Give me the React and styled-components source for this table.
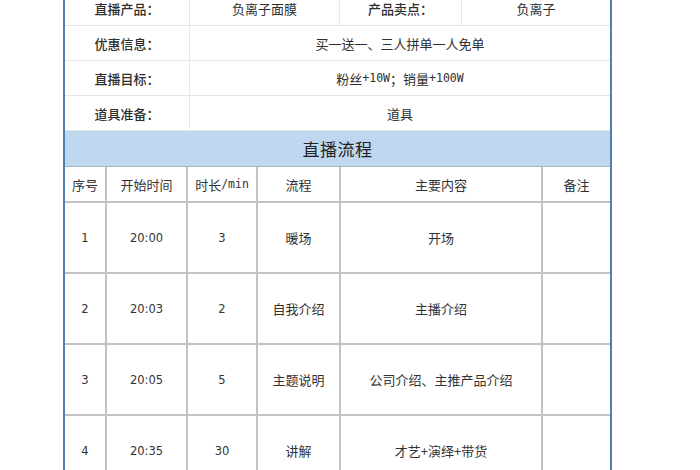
import React from "react";
import styled, { createGlobalStyle } from "styled-components";

const Global = createGlobalStyle`
  html, body { margin: 0; padding: 0; background: #ffffff; }
  body { font-family: "Noto Sans CJK SC", "Noto Sans", sans-serif; color: #333; overflow: hidden; }
`;

const Page = styled.div`
  width: 700px;
  height: 470px;
  overflow: hidden;
  background: #fff;
`;

const Sheet = styled.div`
  margin-left: 63px;
  margin-top: -9px;
  width: 545px;
  border-left: 2px solid #4f7fae;
  border-right: 2px solid #4f7fae;
  background: #fff;
`;

const InfoGrid = styled.div`
  display: grid;
  grid-template-columns: 125px 150px 122px 148px;
  grid-auto-rows: 35px;
`;

const InfoCell = styled.div`
  display: flex;
  align-items: center;
  justify-content: center;
  font-size: 13px;
  color: #2e2e2e;
  font-weight: ${(p) => (p.$label ? 500 : 400)};
  border-bottom: 1px solid #e4e4e4;
  border-right: ${(p) => (p.$last ? "none" : "1px solid #e8e8e8")};
  grid-column: ${(p) => p.$span || "auto"};
  white-space: nowrap;
`;

const Banner = styled.div`
  height: 35px;
  background: #bfd8ef;
  border-bottom: 1px solid #a9b4bf;
  display: flex;
  align-items: center;
  justify-content: center;
  font-size: 17px;
  color: #222;
  letter-spacing: 0.5px;
`;

const FlowGrid = styled.div`
  display: grid;
  grid-template-columns: 42px 81px 70px 83px 202px 67px;
`;

const FlowCell = styled.div`
  display: flex;
  align-items: center;
  justify-content: center;
  font-size: 13px;
  color: #333;
  border-bottom: 2px solid #c2c2c2;
  border-right: ${(p) => (p.$last ? "none" : "2px solid #c2c2c2")};
  white-space: nowrap;
  box-sizing: border-box;
  height: ${(p) => (p.$head ? "36px" : "71px")};
`;

const Num = styled.span`
  font-family: "DejaVu Sans", sans-serif;
  font-size: 11.5px;
`;

const Mono = styled.span`
  font-family: "DejaVu Sans Mono", monospace;
  font-size: 11.5px;
`;

const info = [
  [
    { t: "直播产品：", label: true },
    { t: "负离子面膜" },
    { t: "产品卖点：", label: true },
    { t: "负离子", last: true },
  ],
  [
    { t: "优惠信息：", label: true },
    { t: "买一送一、三人拼单一人免单", span: "span 3", last: true },
  ],
  [
    { t: "直播目标：", label: true },
    { t: <>粉丝<Mono>+10W</Mono>；销量<Mono>+100W</Mono></>, span: "span 3", last: true },
  ],
  [
    { t: "道具准备：", label: true },
    { t: "道具", span: "span 3", last: true },
  ],
];

const head = ["序号", "开始时间", <>时长<Mono>/min</Mono></>, "流程", "主要内容", "备注"];

const rows = [
  ["1", "20:00", "3", "暖场", "开场", ""],
  ["2", "20:03", "2", "自我介绍", "主播介绍", ""],
  ["3", "20:05", "5", "主题说明", "公司介绍、主推产品介绍", ""],
  ["4", "20:35", "30", "讲解", "才艺+演绎+带货", ""],
];

const isNum = (s) => /^[0-9:]+$/.test(s);

export default function App() {
  return (
    <Page>
      <Global />
      <Sheet>
        <InfoGrid>
          {info.map((r, i) =>
            r.map((c, j) => (
              <InfoCell key={`${i}-${j}`} $label={c.label} $span={c.span} $last={c.last}>
                {c.t}
              </InfoCell>
            ))
          )}
        </InfoGrid>
        <Banner>直播流程</Banner>
        <FlowGrid>
          {head.map((h, j) => (
            <FlowCell key={j} $head $last={j === head.length - 1}>
              {h}
            </FlowCell>
          ))}
          {rows.map((r, i) =>
            r.map((c, j) => (
              <FlowCell key={`${i}-${j}`} $last={j === r.length - 1}>
                {isNum(c) ? <Num>{c}</Num> : c}
              </FlowCell>
            ))
          )}
        </FlowGrid>
      </Sheet>
    </Page>
  );
}
